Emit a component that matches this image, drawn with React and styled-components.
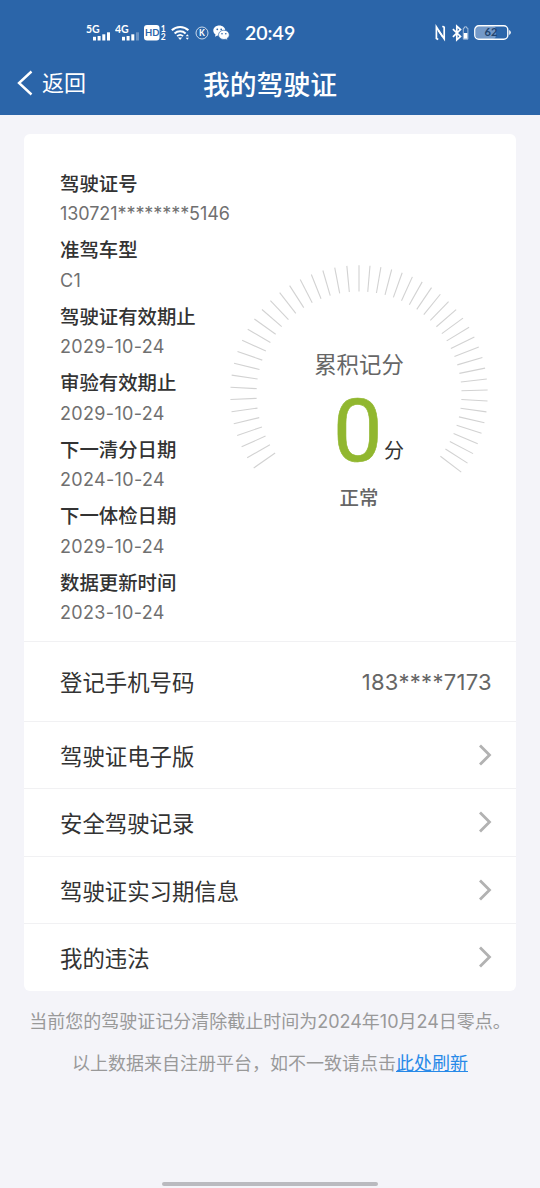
import React from 'react'
import styled, { createGlobalStyle } from 'styled-components'

const details = [
  { label: '驾驶证号', value: '130721********5146', spacing: '-0.07px' },
  { label: '准驾车型', value: 'C1' },
  { label: '驾驶证有效期止', value: '2029-10-24' },
  { label: '审验有效期止', value: '2029-10-24' },
  { label: '下一清分日期', value: '2024-10-24' },
  { label: '下一体检日期', value: '2029-10-24' },
  { label: '数据更新时间', value: '2023-10-24' },
]

const links = ['驾驶证电子版', '安全驾驶记录', '驾驶证实习期信息', '我的违法']

// GAUGE TICKS, degrees clockwise from the top
const leftTicks = Array.from({ length: 23 }, (_, i) => -125.1 + i * 5.44)
const rightTicks = Array.from({ length: 27 }, (_, i) => i * 4.9)
const ticks = [...leftTicks, ...rightTicks]

const Signal = ({ name, weak }) => (
  <svg width="25" height="18" viewBox="0 0 25 18">
    <SvgText x="0" y="9.2" size="10.5">
      {name}
    </SvgText>
    <g fill="#fff">
      <rect x="7" y="12.8" width="3" height="3.7" />
      <rect x="11.6" y="12" width="3" height="4.5" />
      <rect x="16.3" y="10.3" width="3" height="6.2" />
      <rect
        x="21"
        y="8.3"
        width="3"
        height="8.2"
        opacity={weak ? 0.3 : 1}
      />
    </g>
  </svg>
)

const HdIcon = () => (
  <svg width="23" height="18" viewBox="0 0 23 18">
    <rect x="0" y="1" width="15.5" height="15.5" rx="3" fill="#fff" />
    <SvgText x="1" y="12.4" size="9.4" fill="#2b65a9">
      HD
    </SvgText>
    <SvgText x="16.7" y="7.8" size="8.5">
      1
    </SvgText>
    <SvgText x="16.7" y="16.3" size="8.5">
      2
    </SvgText>
  </svg>
)

const WifiIcon = () => (
  <svg width="20" height="18" viewBox="0 0 20 18" fill="none" stroke="#fff">
    <path d="M.8 6.3a12 12 0 0 1 16.6 0" strokeWidth="2" />
    <path d="M3.6 9.4a8 8 0 0 1 11 0" strokeWidth="2" />
    <path d="M6.1 12.2a4.5 4.5 0 0 1 6 0" strokeWidth="1.8" />
    <path d="M7 13.5h4.2L9.1 16z" fill="#fff" stroke="none" />
    <path
      d="M14.7 12.3l1.6-2 1.6 2zM14.7 13.8l1.6 2 1.6-2z"
      fill="#fff"
      stroke="none"
    />
  </svg>
)

const KIcon = () => (
  <svg width="14" height="18" viewBox="0 0 14 18">
    <circle
      cx="7"
      cy="9"
      r="6"
      fill="none"
      stroke="#fff"
      strokeOpacity=".75"
    />
    <SvgText x="4" y="12.1" size="8.5">
      K
    </SvgText>
  </svg>
)

const WechatIcon = () => (
  <svg width="17" height="18" viewBox="0 0 17 18">
    <path
      d="M6.3 1.5C2.9 1.5.3 3.7.3 6.6c0 1.6.8 3 2.2 3.9L2 12.7l2.4-1.2c.6.2 1.3.3 1.9.3 3.4 0 6-2.3 6-5.2s-2.6-5.1-6-5.1z"
      fill="#fff"
    />
    <path
      d="M10.9 6.2c-3 0-5.4 2-5.4 4.7 0 2.6 2.4 4.6 5.4 4.6.6 0 1.2-.1 1.7-.2l2 1-.5-1.8c1.4-.9 2.2-2.2 2.2-3.6 0-2.7-2.4-4.7-5.4-4.7z"
      fill="#fff"
      stroke="#2b65a9"
      strokeWidth=".7"
    />
    <g fill="#2b65a9">
      <circle cx="4.3" cy="5.3" r=".9" />
      <circle cx="8.2" cy="5.3" r=".9" />
      <circle cx="9" cy="9.8" r=".8" />
      <circle cx="12.8" cy="9.8" r=".8" />
    </g>
  </svg>
)

const NfcIcon = () => (
  <svg
    width="12"
    height="18"
    viewBox="0 0 12 18"
    fill="none"
    stroke="#fff"
    strokeWidth="1.7"
  >
    <path d="M3.2 15.6L1.4 14.6V3L7.6 12.6" />
    <path d="M7.4 2.2l1.8 1v11.6L3.4 6.4" />
  </svg>
)

const BluetoothIcon = () => (
  <svg width="17" height="18" viewBox="0 0 17 18" fill="none" stroke="#fff">
    <path d="M.9 5.2l7.6 7.3-3.7 3.3V2.2l3.7 3.3L.9 12.8" strokeWidth="1.7" />
    <path d="M12.6 2.8h2v1.3h1.3v11.1h-4.6V4.1h1.3z" strokeOpacity=".55" />
    <rect x="11.8" y="9" width="3.6" height="5.7" fill="#fff" stroke="none" />
  </svg>
)

const BatteryIcon = () => (
  <svg width="38" height="18" viewBox="0 0 38 18">
    <rect x="1.8" y="2.3" width="20" height="12.4" rx="3" fill="#7499c8" />
    <rect
      x=".8"
      y="1.8"
      width="33"
      height="13.4"
      rx="4"
      fill="none"
      stroke="#fff"
      strokeWidth="1.4"
    />
    <path d="M35.2 6.1a2.6 2.6 0 0 1 0 4.8z" fill="#fff" />
    <SvgText x="10.6" y="12.4" size="11" fill="#21436e">
      62
    </SvgText>
  </svg>
)

const App = () => {
  return (
    <>
      <GlobalStyle />
      <Page>
        <StatusBar>
          <StatusGroup>
            <Signal name="5G" />
            <Signal name="4G" weak />
            <HdIcon />
            <WifiIcon />
            <KIcon />
            <WechatIcon />
            <Time>20:49</Time>
          </StatusGroup>
          <StatusGroup $gap="5px">
            <NfcIcon />
            <BluetoothIcon />
            <BatteryIcon />
          </StatusGroup>
        </StatusBar>
        <NavBar>
          <BackButton>
            <svg width="16" height="26" viewBox="0 0 16 26" fill="none">
              <path d="M14.5 1.5L2 13l12.5 11.5" stroke="#fff" strokeWidth="2.4" />
            </svg>
            <span>返回</span>
          </BackButton>
          <Title>我的驾驶证</Title>
        </NavBar>
        <Card>
          <Summary>
            <Details>
              {details.map(({ label, value, spacing }) => (
                <React.Fragment key={label}>
                  <Label>{label}</Label>
                  <Value $spacing={spacing}>{value}</Value>
                </React.Fragment>
              ))}
            </Details>
            <Gauge>
              <Dial viewBox="-130 -130 260 260">
                {ticks.map((angle) => (
                  <line
                    key={angle}
                    y1="-128.7"
                    y2="-102.5"
                    transform={`rotate(${angle})`}
                  />
                ))}
              </Dial>
              <GaugeTitle>累积记分</GaugeTitle>
              <Score>
                <Points>0</Points>
                <Unit>分</Unit>
              </Score>
              <Status>正常</Status>
            </Gauge>
          </Summary>
          <Row $height="79.5px">
            登记手机号码
            <Phone>183****7173</Phone>
          </Row>
          {links.map((link) => (
            <Row key={link}>
              {link}
              <svg width="14" height="24" viewBox="0 0 14 24" fill="none">
                <path d="M2 2.4L11.5 12 2 21.6" stroke="#b2b2b2" strokeWidth="2.8" />
              </svg>
            </Row>
          ))}
        </Card>
        <Note>当前您的驾驶证记分清除截止时间为2024年10月24日零点。</Note>
        <Note>
          以上数据来自注册平台，如不一致请点击<Refresh href="#">此处刷新</Refresh>
        </Note>
        <HomeBar />
      </Page>
    </>
  )
}
export default App

const GlobalStyle = createGlobalStyle`
  * {
    box-sizing: border-box;
  }

  body {
    margin: 0;
    background-color: #f4f4f9;
    font-family: Inter, 'Noto Sans CJK SC', sans-serif;
  }

  svg {
    display: block;
    flex-shrink: 0;
  }
`
const Page = styled.main`
  display: flex;
  flex-direction: column;
  width: 540px;
  height: 1188px;
  overflow: hidden;
`
const StatusBar = styled.header`
  display: flex;
  justify-content: space-between;
  height: 52px;
  padding: 24px 28px 0 86px;
  background-color: #2b65a9;
`
const StatusGroup = styled.div`
  display: flex;
  height: 18px;
  gap: ${({ $gap }) => $gap || '4px'};
`
const SvgText = styled.text`
  font-family: Lato, sans-serif;
  font-size: ${({ size }) => size}px;
  font-weight: 700;
  fill: ${({ fill }) => fill || '#fff'};
`
const Time = styled.span`
  margin-left: 11px;
  color: #fff;
  font-family: Lato, sans-serif;
  font-size: 19.5px;
  font-weight: 600;
  line-height: 18px;
`
const NavBar = styled.nav`
  display: grid;
  grid-template-columns: 1fr auto 1fr;
  align-items: center;
  height: 63px;
  padding: 0 17px;
  background-color: #2b65a9;
`
const BackButton = styled.button`
  display: flex;
  align-items: center;
  gap: 9px;
  padding: 0 0 1px;
  border: none;
  color: #fff;
  background: none;
  font-family: inherit;
  font-size: 22px;
  line-height: 28px;
`
const Title = styled.h1`
  margin: 0;
  padding-top: 2px;
  color: #fff;
  font-size: 26.8px;
  font-weight: 500;
  line-height: 36px;
`
const Card = styled.section`
  margin: 18.5px 24px 10.5px;
  border-radius: 6px;
  background-color: #fff;
`
const Summary = styled.div`
  display: flex;
  height: 507.5px;
  padding: 33px 26px 0 36px;
`
const Details = styled.dl`
  width: 169px;
  margin: 0;
`
const Label = styled.dt`
  color: #333;
  font-size: 19.4px;
  font-weight: 500;
  line-height: 34.5px;
`
const Value = styled.dd`
  margin: 0;
  color: #707070;
  font-size: 18px;
  line-height: 26px;
  padding-bottom: 6px;
  letter-spacing: ${({ $spacing }) => $spacing || '0.33px'};
  white-space: nowrap;
`
const Gauge = styled.div`
  position: relative;
  display: flex;
  flex-direction: column;
  align-items: center;
  width: 260px;
  height: 260px;
  margin-top: 97.5px;
  padding-top: 84.5px;
`
const Dial = styled.svg`
  position: absolute;
  inset: 0;
  stroke: #d2d2d2;
  stroke-width: 1.1;
`
const GaugeTitle = styled.span`
  color: #666;
  font-size: 22.4px;
  line-height: 32px;
`
const Score = styled.div`
  display: flex;
  align-items: flex-start;
  gap: 1.5px;
  height: 101px;
  padding-left: 19px;
`
const Points = styled.span`
  color: #91b72f;
  font-family: Roboto, sans-serif;
  font-size: 88px;
  line-height: 99px;
  -webkit-text-stroke: 0.6px #91b72f;
`
const Unit = styled.span`
  padding-top: 55px;
  color: #333;
  font-size: 20px;
  line-height: 30px;
`
const Status = styled.span`
  color: #666;
  font-size: 19.4px;
  font-weight: 500;
  line-height: 33px;
`
const Row = styled.div`
  display: flex;
  justify-content: space-between;
  align-items: center;
  height: ${({ $height }) => $height || '67.5px'};
  padding: 0 24px 0 36px;
  border-top: 1px solid #f1f1f3;
  color: #333;
  font-size: 22.4px;
`
const Phone = styled.span`
  padding-top: 2px;
  color: #666;
  font-size: 22px;
  letter-spacing: 0.3px;
`
const Note = styled.p`
  margin: 0;
  color: #999;
  font-size: 18px;
  line-height: 42px;
  text-align: center;
  white-space: nowrap;
`
const Refresh = styled.a`
  color: #2789e8;
`
const HomeBar = styled.div`
  width: 216px;
  height: 4px;
  margin: auto auto 2px;
  border-radius: 2px;
  background-color: #bababf;
`
